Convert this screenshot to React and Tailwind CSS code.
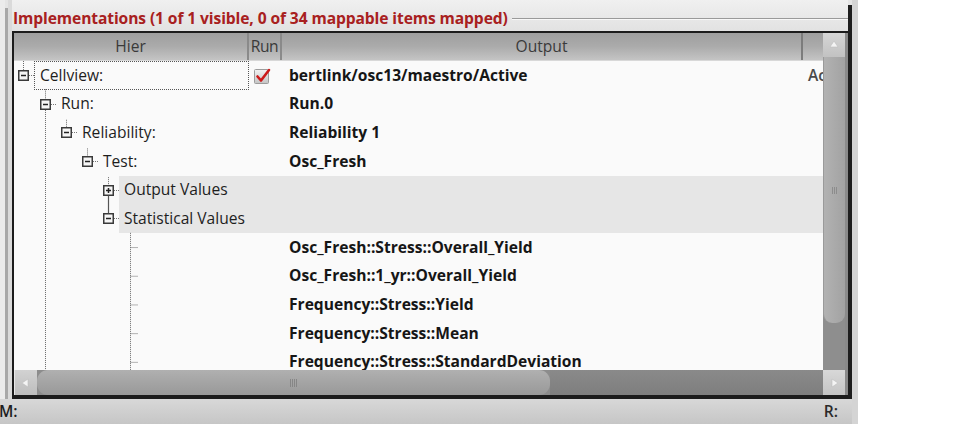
import React from "react";

const ROW = "h-[28.7px]";

const rows = [
  { pad: "pl-[4px]", label: "Cellview:", out: "bertlink/osc13/maestro/Active", exp: "minus", focus: true, check: true, extra: "Active" },
  { pad: "pl-[26px]", label: "Run:", out: "Run.0", exp: "minus" },
  { pad: "pl-[47px]", label: "Reliability:", out: "Reliability 1", exp: "minus" },
  { pad: "pl-[68px]", label: "Test:", out: "Osc_Fresh", exp: "minus" },
  { pad: "pl-[89px]", label: "Output Values", exp: "plus", band: true },
  { pad: "pl-[89px]", label: "Statistical Values", exp: "minus", band: true },
  { leaf: true, out: "Osc_Fresh::Stress::Overall_Yield" },
  { leaf: true, out: "Osc_Fresh::1_yr::Overall_Yield" },
  { leaf: true, out: "Frequency::Stress::Yield" },
  { leaf: true, out: "Frequency::Stress::Mean" },
  { leaf: true, out: "Frequency::Stress::StandardDeviation" },
];

function Expander({ kind }) {
  return (
    <svg width="11" height="11" viewBox="0 0 11 11" className="shrink-0">
      <rect x="0.75" y="0.75" width="9.5" height="9.5" fill="#f6f6f6" stroke="#3a3a3a" strokeWidth="1.5" />
      <line x1="3" y1="5.5" x2="8" y2="5.5" stroke="#222" strokeWidth="1.5" />
      {kind === "plus" && <line x1="5.5" y1="3" x2="5.5" y2="8" stroke="#222" strokeWidth="1.5" />}
    </svg>
  );
}

function Check() {
  return (
    <svg width="19" height="19" viewBox="0 0 19 19">
      <defs>
        <linearGradient id="cb" x1="0" y1="0" x2="0" y2="1">
          <stop offset="0" stopColor="#f2f2f2" />
          <stop offset="1" stopColor="#c4c4c4" />
        </linearGradient>
      </defs>
      <rect x="1.5" y="3.5" width="14" height="14" rx="1" fill="url(#cb)" stroke="#9c9c9c" />
      <path d="M4.5 10.5 L8 14.5 L16 4" fill="none" stroke="#cc1a1a" strokeWidth="2.6" strokeLinecap="round" strokeLinejoin="round" />
    </svg>
  );
}

function Tri({ dir }) {
  const pts = {
    up: "3,9 11,9 7,3",
    left: "9,3 9,11 3,7",
    right: "5,3 5,11 11,7",
  }[dir];
  return (
    <svg width="14" height="14" viewBox="0 0 14 14">
      <polygon points={pts} fill="#f4f4f4" stroke="#bdbdbd" strokeWidth="0.6" />
    </svg>
  );
}

function TreeLines() {
  const c = (i) => 14.35 + i * 28.7;
  const dot = { stroke: "#6a6a6a", strokeWidth: 1, strokeDasharray: "1 1" };
  return (
    <svg className="absolute left-0 top-0 pointer-events-none" width="809" height="309">
      <line x1="9.5" y1="0" x2="9.5" y2={c(0) - 5.5} {...dot} />
      <line x1="31.5" y1={c(0) + 14} x2="31.5" y2={c(1) - 5.5} {...dot} />
      <line x1="52.5" y1={c(2) - 13} x2="52.5" y2={c(2) - 5.5} {...dot} />
      <line x1="73.5" y1={c(3) - 13} x2="73.5" y2={c(3) - 5.5} {...dot} />
      <line x1="94.5" y1={c(4) - 13} x2="94.5" y2={c(4) - 5.5} {...dot} />
      <line x1="94.5" y1={c(4) + 5.5} x2="94.5" y2={c(5) - 5.5} stroke="#555" strokeWidth="1.2" />
      <line x1="31.5" y1={c(1) + 6} x2="31.5" y2="309" {...dot} />
      <line x1="116.5" y1={c(5) + 14} x2="116.5" y2="309" {...dot} />
      {[6, 7, 8, 9, 10].map((i) => (
        <line key={i} x1="116.5" y1={c(i)} x2="124" y2={c(i)} {...dot} />
      ))}
    </svg>
  );
}

export default function App() {
  return (
    <div className="w-[963px] h-[429px] bg-white overflow-hidden font-['Open_Sans',sans-serif]">
      <div className="w-[858px] h-[424px] flex flex-col bg-[#e4e4e4]">
        <div className="flex h-[399px]">
          <div className="w-[12px] flex shrink-0">
            <div className="w-[5px] bg-[#ebebeb]" />
            <div className="w-[3px] bg-[#a8a8a8] mt-[8px]" />
            <div className="w-[4px] bg-[#dadada]" />
          </div>

          <div className="flex-1 flex flex-col min-w-0">
            <div className="h-[31px] shrink-0 flex items-center pt-[6px] pl-[1px] bg-gradient-to-b from-[#f0f0f0] to-[#e2e2e2]">
              <span className="text-[15.6px] font-bold text-[#a82020] leading-none whitespace-nowrap tracking-[-0.1px]">
                Implementations (1 of 1 visible, 0 of 34 mappable items mapped)
              </span>
              <div className="flex-1 ml-[4px] h-[2px] border-t border-[#9a9a9a] border-b border-b-[#f8f8f8]" />
            </div>

            <div className="flex-1 flex flex-col min-h-0 border-l-2 border-t-2 border-b-4 border-[#1c1c1c]">
              <div className="flex flex-1 min-h-0">
                <div className="w-[809px] flex flex-col bg-[#fafafa] overflow-hidden">
                  <div className="h-[28px] shrink-0 grid grid-cols-[235px_33px_521px_20px] bg-gradient-to-b from-[#9e9e9e] via-[#ababab] to-[#c4c4c4] text-[15.6px] text-[#3a3a3a] border-b border-[#d8d8d8]">
                    <div className="flex items-center justify-center border-r-2 border-[#8a8a8a]">Hier</div>
                    <div className="flex items-center justify-center border-r-2 border-[#8a8a8a] tracking-[-0.5px]">Run</div>
                    <div className="flex items-center justify-center border-r-2 border-[#7c7c7c]">Output</div>
                    <div />
                  </div>
                  <div className="relative flex-1 min-h-0">
                    {rows.map((r, i) => (
                      <div key={i} className={`${ROW} grid grid-cols-[235px_33px_521px_20px] text-[15.6px] leading-none`}>
                        <div className={`flex items-stretch ${r.pad || ""}`}>
                          {!r.leaf && (
                            <>
                              <div className="flex items-center">
                                <Expander kind={r.exp} />
                              </div>
                              <div className="w-[5px] flex items-center">
                                <div className="w-full border-t border-dotted border-[#777]" />
                              </div>
                              <div
                                className={`flex-1 flex items-center pl-[5px] text-[#1e1e1e] whitespace-nowrap ${
                                  r.focus ? "border border-dotted border-[#555]" : ""
                                } ${r.band ? "bg-[#e6e6e6]" : ""}`}
                              >
                                {r.label}
                              </div>
                            </>
                          )}
                        </div>
                        <div className={`flex items-center pl-[4px] ${r.band ? "bg-[#e6e6e6]" : ""}`}>
                          {r.check && <Check />}
                        </div>
                        <div className={`flex items-center pl-[7px] font-bold text-[#161616] whitespace-nowrap overflow-hidden ${r.band ? "bg-[#e6e6e6]" : ""}`}>
                          {r.out}
                        </div>
                        <div className={`flex items-center pl-[5px] font-semibold text-[#4a4a4a] whitespace-nowrap overflow-hidden ${r.band ? "bg-[#e6e6e6]" : ""}`}>
                          {r.extra}
                        </div>
                      </div>
                    ))}
                    <TreeLines />
                  </div>
                </div>
                <div className="w-[25px] flex flex-col border-r-[3px] border-[#8a8a8a]">
                  <div className="h-[24px] shrink-0 bg-gradient-to-b from-[#d6d6d6] to-[#c2c2c2] flex items-center justify-center">
                    <Tri dir="up" />
                  </div>
                  <div className="flex-1 bg-[#8e8e8e] flex flex-col">
                    <div className="h-[266px] rounded-b-[9px] bg-gradient-to-r from-[#b2b2b2] to-[#a2a2a2] border-l border-[#9a9a9a] flex items-center justify-center">
                      <div className="flex gap-[1px]">
                        <div className="w-[1px] h-[7px] bg-[#8c8c8c]" />
                        <div className="w-[1px] h-[7px] bg-[#8c8c8c]" />
                        <div className="w-[1px] h-[7px] bg-[#8c8c8c]" />
                      </div>
                    </div>
                  </div>
                </div>
              </div>
              <div className="h-[25px] shrink-0 flex bg-[#8c8c8c]">
                <div className="w-[23px] bg-gradient-to-b from-[#d2d2d2] to-[#bdbdbd] flex items-center justify-center border-l border-[#e8e8e8]">
                  <Tri dir="left" />
                </div>
                <div className="w-[513px] rounded-[11px] bg-gradient-to-b from-[#b0b0b0] via-[#a4a4a4] to-[#999999] flex items-center justify-center">
                  <div className="flex gap-[1px]">
                    <div className="w-[1px] h-[8px] bg-[#868686]" />
                    <div className="w-[1px] h-[8px] bg-[#868686]" />
                    <div className="w-[1px] h-[8px] bg-[#868686]" />
                    <div className="w-[1px] h-[8px] bg-[#868686]" />
                  </div>
                </div>
                <div className="w-[273px] bg-gradient-to-b from-[#8a8a8a] to-[#7e7e7e]" />
                <div className="w-[22px] bg-gradient-to-b from-[#d8d8d8] to-[#c4c4c4] flex items-center justify-center">
                  <Tri dir="right" />
                </div>
                <div className="w-[3px] bg-[#8a8a8a]" />
              </div>
            </div>
          </div>

          <div className="w-[4px] shrink-0 bg-[#1e1e1e] mt-[5px]" />
          <div className="w-[6px] shrink-0 bg-[#d4d4d4]" />
        </div>

        <div className="h-[25px] shrink-0 flex">
          <div className="flex-1 flex items-center justify-between pr-[14px] bg-gradient-to-b from-[#d8d8d8] to-[#c6c6c6] text-[15.6px] font-semibold text-[#1e1e1e] leading-none">
            <span className="-ml-[1px]">M:</span>
            <span className="text-[#2a2a2a]">R:</span>
          </div>
          <div className="w-[6px] bg-[#d4d4d4]" />
        </div>
      </div>
    </div>
  );
}
